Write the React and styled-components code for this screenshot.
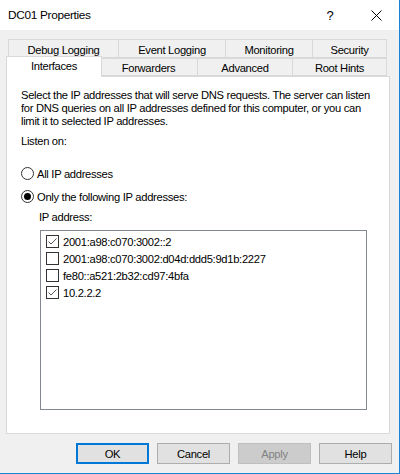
import React from "react";
import styled, { createGlobalStyle } from "styled-components";

const Global = createGlobalStyle`
  html, body { margin: 0; padding: 0; }
  body {
    font-family: "Liberation Sans", Arial, sans-serif;
    font-size: 11.2px;
    letter-spacing: -0.3px;
    color: #000;
  }
`;

const Window = styled.div`
  width: 400px;
  height: 474px;
  box-sizing: border-box;
  background: #f0f0f0;
  border-right: 1px solid #1883d7;
  border-bottom: 1px solid #1883d7;
  display: flex;
  flex-direction: column;
  overflow: hidden;
`;

const TitleBar = styled.div`
  height: 30px;
  background: #fff;
  display: flex;
  align-items: center;
  padding-left: 8px;
  flex-shrink: 0;
`;

const Title = styled.div`
  flex: 1;
  font-size: 11.8px;
  line-height: 14px;
`;

const TitleButton = styled.div`
  width: ${(p) => p.$w}px;
  height: 30px;
  display: flex;
  align-items: center;
  justify-content: center;
  font-size: 13px;
`;

const TabStrip = styled.div`
  margin: 10px 0 0 8px;
  width: 379px;
  display: flex;
  flex-direction: column;
`;

const TabRow = styled.div`
  display: flex;
  height: 18px;
  align-items: flex-end;
`;

const Tab = styled.div`
  box-sizing: border-box;
  flex: 0 0 ${(p) => (p.$active ? p.$w + 4 : p.$w)}px;
  height: ${(p) => (p.$active ? 21 : p.$back ? 19 : 18)}px;
  margin-bottom: ${(p) => (p.$active ? "-1px" : "0")};
  margin-left: ${(p) => (p.$first ? (p.$active ? "-2px" : "0") : p.$active ? "-2px" : "-1px")};
  margin-right: ${(p) => (p.$active ? "-2px" : "0")};
  background: ${(p) => (p.$active ? "#fff" : "#f0f0f0")};
  border: 1px solid #d9d9d9;
  border-bottom: ${(p) => (p.$active ? "none" : "1px solid #d9d9d9")};
  position: relative;
  z-index: ${(p) => (p.$active ? 2 : 1)};
  display: flex;
  justify-content: center;
  align-items: ${(p) => (p.$active ? "flex-start" : "center")};
  padding-top: ${(p) => (p.$active ? "2px" : p.$back ? "3px" : "1px")};
  line-height: 14px;
  white-space: nowrap;
`;

const Panel = styled.div`
  margin-left: 6px;
  width: 384px;
  height: 358px;
  box-sizing: border-box;
  background: #fff;
  border: 1px solid #d9d9d9;
  padding: 12px 14px 0 14px;
  display: flex;
  flex-direction: column;
  position: relative;
  z-index: 1;
`;

const Para = styled.p`
  margin: 0;
  line-height: 13px;
`;

const Label = styled.div`
  line-height: 13px;
  margin-top: ${(p) => p.$mt || 0}px;
  margin-left: ${(p) => p.$ml || 0}px;
`;

const RadioRow = styled.div`
  display: flex;
  align-items: center;
  gap: 3px;
  height: 13px;
  margin-top: ${(p) => p.$mt}px;
`;

const RadioCircle = styled.span`
  width: 13px;
  height: 13px;
  box-sizing: border-box;
  border: 1px solid #333;
  border-radius: 50%;
  display: flex;
  align-items: center;
  justify-content: center;
  background: #fff;
  &::after {
    content: "";
    width: 7px;
    height: 7px;
    border-radius: 50%;
    background: ${(p) => (p.$on ? "#000" : "transparent")};
  }
`;

const ListBox = styled.div`
  margin: 6px 0 0 19px;
  width: 327px;
  height: 180px;
  box-sizing: border-box;
  border: 1px solid #828790;
  padding: 2px 0 0 5px;
  display: flex;
  flex-direction: column;
`;

const ListItem = styled.div`
  display: flex;
  align-items: center;
  height: 17px;
  gap: 4px;
`;

const CheckBox = styled.span`
  width: 13px;
  height: 13px;
  box-sizing: border-box;
  border: 1px solid #333;
  background: #fff;
  display: flex;
  align-items: center;
  justify-content: center;
`;

const ButtonRow = styled.div`
  display: flex;
  justify-content: flex-end;
  gap: 8px;
  margin: 9px 7px 0 0;
`;

const Button = styled.div`
  width: 73px;
  height: 21px;
  box-sizing: border-box;
  background: ${(p) => (p.$disabled ? "#cccccc" : "#e1e1e1")};
  border: ${(p) => (p.$default ? "2px solid #0078d7" : p.$disabled ? "1px solid #bfbfbf" : "1px solid #adadad")};
  color: ${(p) => (p.$disabled ? "#838383" : "#000")};
  display: flex;
  align-items: center;
  justify-content: center;
  line-height: 14px;
`;

const Check = () => (
  <svg width="11" height="11" viewBox="0 0 11 11">
    <path d="M1.5 5.5 L4 8 L9.5 2.5" fill="none" stroke="#555" strokeWidth="1" />
  </svg>
);

const backTabs = [
  ["Debug Logging", 111],
  ["Event Logging", 108],
  ["Monitoring", 88],
  ["Security", 75],
];
const frontTabs = [
  ["Interfaces", 92, true],
  ["Forwarders", 99],
  ["Advanced", 96],
  ["Root Hints", 95],
];

const ips = [
  ["2001:a98:c070:3002::2", true],
  ["2001:a98:c070:3002:d04d:ddd5:9d1b:2227", false],
  ["fe80::a521:2b32:cd97:4bfa", false],
  ["10.2.2.2", true],
];

export default function App() {
  return (
    <>
      <Global />
      <Window>
        <TitleBar>
          <Title>DC01 Properties</Title>
          <TitleButton $w={46}>?</TitleButton>
          <TitleButton $w={46}>
            <svg width="11" height="11" viewBox="0 0 11 11">
              <path d="M0.5 0.5 L10.5 10.5 M10.5 0.5 L0.5 10.5" stroke="#000" strokeWidth="1" />
            </svg>
          </TitleButton>
        </TitleBar>
        <TabStrip>
          <TabRow>
            {backTabs.map(([t, w], i) => (
              <Tab key={t} $w={w} $back $first={i === 0}>{t}</Tab>
            ))}
          </TabRow>
          <TabRow>
            {frontTabs.map(([t, w, a], i) => (
              <Tab key={t} $w={w} $active={a} $first={i === 0}>{t}</Tab>
            ))}
          </TabRow>
        </TabStrip>
        <Panel>
          <Para>
            Select the IP addresses that will serve DNS requests. The server can listen
            <br />
            for DNS queries on all IP addresses defined for this computer, or you can
            <br />
            limit it to selected IP addresses.
          </Para>
          <Label $mt={7}>Listen on:</Label>
          <RadioRow $mt={19}>
            <RadioCircle />
            <span>All IP addresses</span>
          </RadioRow>
          <RadioRow $mt={10}>
            <RadioCircle $on />
            <span>Only the following IP addresses:</span>
          </RadioRow>
          <Label $mt={8} $ml={18}>IP address:</Label>
          <ListBox>
            {ips.map(([ip, on]) => (
              <ListItem key={ip}>
                <CheckBox>{on && <Check />}</CheckBox>
                <span>{ip}</span>
              </ListItem>
            ))}
          </ListBox>
        </Panel>
        <ButtonRow>
          <Button $default>OK</Button>
          <Button>Cancel</Button>
          <Button $disabled>Apply</Button>
          <Button>Help</Button>
        </ButtonRow>
      </Window>
    </>
  );
}
